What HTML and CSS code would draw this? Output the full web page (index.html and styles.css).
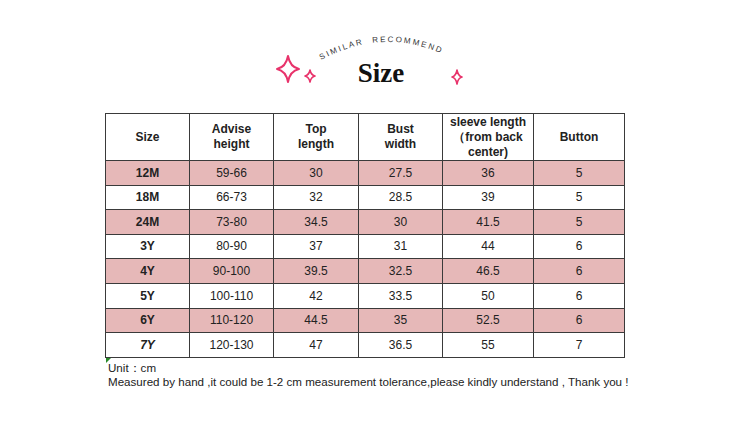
FILE: index.html
```html
<!DOCTYPE html>
<html>
<head>
<meta charset="utf-8">
<link rel="stylesheet" href="styles.css">
</head>
<body>
<div class="page">
  <header class="title">
    <svg class="title-art" width="200" height="70" viewBox="270 30 200 70" xmlns="http://www.w3.org/2000/svg">
      <defs>
        <path id="arc" d="M321,60 Q384,26 447,56"/>
      </defs>
      <g fill="none" stroke="#e8336b" stroke-width="2" stroke-linejoin="round">
        <path d="M288,56 Q290,67 299,69 Q290,71 288,82 Q286,71 277,69 Q286,67 288,56 Z"/>
      </g>
      <g fill="none" stroke="#e8336b" stroke-width="1.6" stroke-linejoin="round">
        <path d="M310,70 Q311,75 315,76 Q311,77 310,82 Q309,77 305,76 Q309,75 310,70 Z"/>
        <path d="M457,70 Q458,76 462,77 Q458,78 457,84 Q456,78 452,77 Q456,76 457,70 Z"/>
      </g>
      <text class="arc-text"><textPath href="#arc" textLength="124" lengthAdjust="spacing">SIMILAR&#160;&#160;RECOMMEND</textPath></text>
      <text class="size-text" x="381" y="82" text-anchor="middle">Size</text>
    </svg>
  </header>

  <table class="chart">
    <colgroup>
      <col class="c1"><col class="c2"><col class="c3"><col class="c4"><col class="c5"><col class="c6">
    </colgroup>
    <thead>
      <tr class="head">
        <th>Size</th>
        <th>Advise<br>height</th>
        <th>Top<br>length</th>
        <th>Bust<br>width</th>
        <th>sleeve length<br>（from back<br>center)</th>
        <th>Button</th>
      </tr>
    </thead>
    <tbody>
      <tr class="pink h25"><td class="sz">12M</td><td>59-66</td><td>30</td><td>27.5</td><td>36</td><td>5</td></tr>
      <tr class="h24"><td class="sz">18M</td><td>66-73</td><td>32</td><td>28.5</td><td>39</td><td>5</td></tr>
      <tr class="pink h25"><td class="sz">24M</td><td>73-80</td><td>34.5</td><td>30</td><td>41.5</td><td>5</td></tr>
      <tr class="h24"><td class="sz">3Y</td><td>80-90</td><td>37</td><td>31</td><td>44</td><td>6</td></tr>
      <tr class="pink h25"><td class="sz">4Y</td><td>90-100</td><td>39.5</td><td>32.5</td><td>46.5</td><td>6</td></tr>
      <tr class="h25"><td class="sz">5Y</td><td>100-110</td><td>42</td><td>33.5</td><td>50</td><td>6</td></tr>
      <tr class="pink h24"><td class="sz">6Y</td><td>110-120</td><td>44.5</td><td>35</td><td>52.5</td><td>6</td></tr>
      <tr class="h25"><td class="sz it">7Y</td><td>120-130</td><td>47</td><td>36.5</td><td>55</td><td>7</td></tr>
    </tbody>
  </table>

  <div class="notes">
    <span class="marker"></span>
    <p>Unit：cm</p>
    <p>Measured by hand ,it could be 1-2 cm measurement tolerance,please kindly understand , Thank you !</p>
  </div>
</div>
</body>
</html>
```

FILE: styles.css
```css
html, body {
  margin: 0;
  padding: 0;
  background: #ffffff;
}

.page {
  width: 750px;
  height: 429px;
  font-family: "Liberation Sans", Arial, sans-serif;
  color: #222222;
}

.title {
  height: 113px;
  display: flex;
}

.title-art {
  margin-left: 270px;
  margin-top: 30px;
  display: block;
}

.arc-text {
  font-family: "Liberation Sans", Arial, sans-serif;
  font-size: 8px;
  fill: #333333;
}

.size-text {
  font-family: "Liberation Serif", "Times New Roman", serif;
  font-weight: bold;
  font-size: 27px;
  fill: #111111;
}

.chart {
  margin-left: 105px;
  border-collapse: collapse;
  table-layout: fixed;
  width: 520px;
  font-size: 12px;
  line-height: 15px;
}

.c1 { width: 84px; }
.c2 { width: 84px; }
.c3 { width: 85px; }
.c4 { width: 84px; }
.c5 { width: 91px; }
.c6 { width: 91px; }

.chart th,
.chart td {
  border: 1px solid #3a3a3a;
  padding: 0;
  text-align: center;
  vertical-align: middle;
  color: #222222;
}

.chart th {
  font-weight: bold;
}

.head { height: 47px; }
.h25 { height: 25px; }
.h24 { height: 24px; }

.pink td {
  background: #e6b8b8;
}

.sz {
  font-weight: bold;
}

.it {
  font-style: italic;
}

.notes {
  position: relative;
  margin-left: 108px;
  padding-top: 3px;
  font-size: 11.6px;
  line-height: 14px;
  color: #222222;
}

.notes p {
  margin: 0;
}

.marker {
  position: absolute;
  left: -2px;
  top: 0;
  width: 0;
  height: 0;
  border-top: 5px solid #2a8a2a;
  border-right: 5px solid transparent;
}
```
